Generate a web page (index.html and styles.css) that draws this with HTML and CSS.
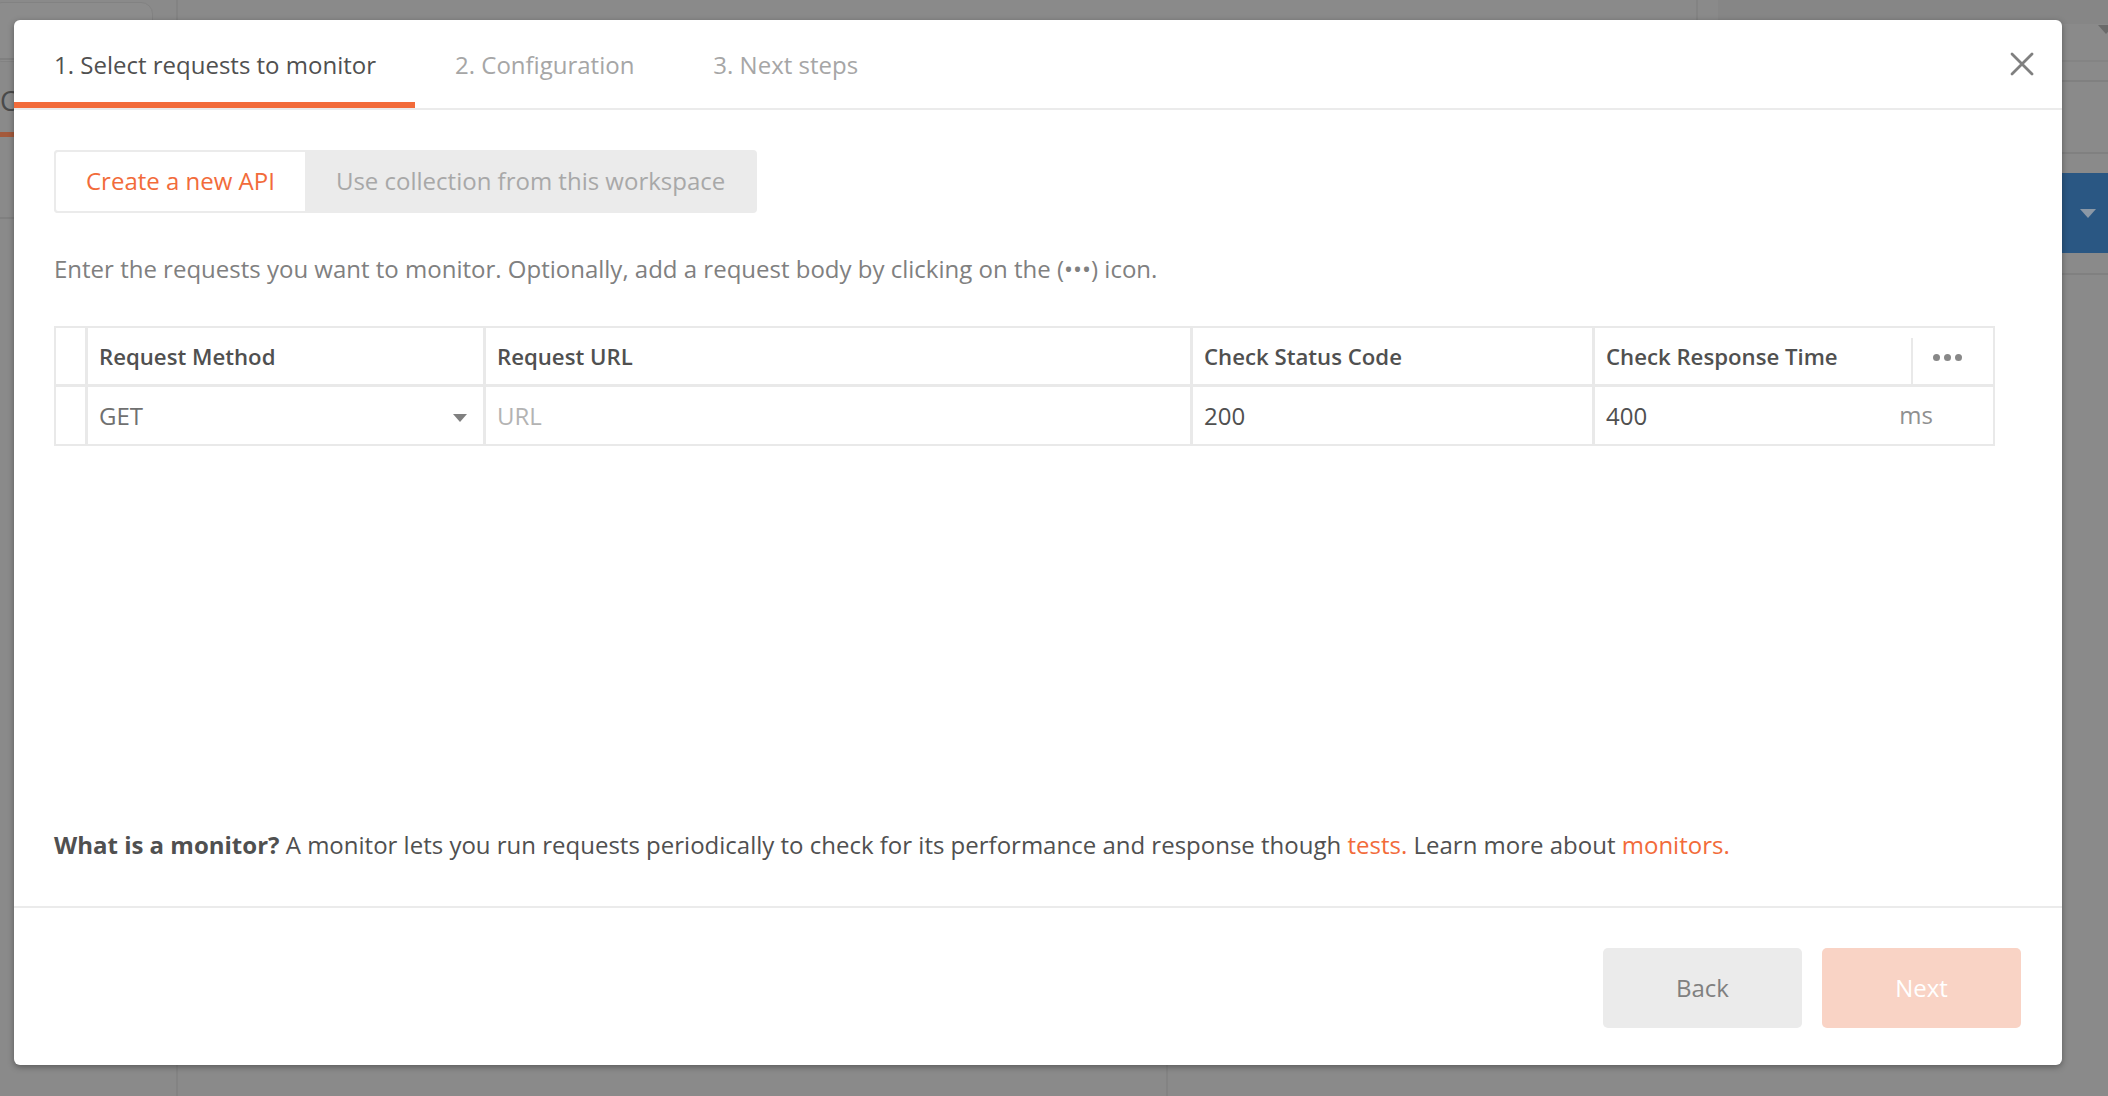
FILE: index.html
```html
<!DOCTYPE html>
<html lang="en">
<head>
<meta charset="utf-8">
<title>Create monitor</title>
<link rel="stylesheet" href="styles.css">
</head>
<body>
<div class="backdrop">
  <div class="bg-sidebar-tab"></div>
  <div class="bg-vline bg-v1"></div>
  <div class="bg-vline bg-v2"></div>
  <div class="bg-vline bg-v3"></div>
  <div class="bg-top-panel"></div>
  <div class="bg-hline bg-hl1"></div>
  <div class="bg-hline bg-hl2"></div>
  <div class="bg-letter">C</div>
  <div class="bg-orange"></div>
  <div class="bg-hline bg-hr1"></div>
  <div class="bg-hline bg-hr2"></div>
  <div class="bg-hline bg-hr3"></div>
  <div class="bg-hline bg-hr4"></div>
  <div class="bg-blue"><span class="bg-caret"></span></div>
  <span class="bg-caret bg-caret-top"></span>
</div>

<div class="modal">
  <header class="modal-header">
    <nav class="tabs">
      <div class="tab active">1. Select requests to monitor</div>
      <div class="tab">2. Configuration</div>
      <div class="tab">3. Next steps</div>
    </nav>
    <button class="close" aria-label="Close">
      <svg width="24" height="24" viewBox="0 0 24 24"><path d="M2 2 L22 22 M22 2 L2 22" stroke="#808080" stroke-width="2.8" stroke-linecap="round" fill="none"/></svg>
    </button>
  </header>

  <main class="modal-body">
    <div class="segmented">
      <div class="seg seg-active">Create a new API</div>
      <div class="seg">Use collection from this workspace</div>
    </div>

    <p class="desc">Enter the requests you want to monitor. Optionally, add a request body by clicking on the (&bull;&bull;&bull;) icon.</p>

    <div class="grid-table">
      <div class="cell handle"></div>
      <div class="cell head">Request Method</div>
      <div class="cell head">Request URL</div>
      <div class="cell head">Check Status Code</div>
      <div class="cell head head-last">
        <span class="head-label">Check Response Time</span>
        <span class="dots"><i></i><i></i><i></i></span>
      </div>

      <div class="cell handle"></div>
      <div class="cell method">GET <span class="caret"></span></div>
      <div class="cell placeholder">URL</div>
      <div class="cell value">200</div>
      <div class="cell value time">400 <span class="unit">ms</span></div>
    </div>

    <p class="info"><strong>What is a monitor?</strong> A monitor lets you run requests periodically to check for its performance and response though <a class="link">tests.</a> Learn more about <a class="link">monitors.</a></p>
  </main>

  <footer class="modal-footer">
    <button class="btn btn-back">Back</button>
    <button class="btn btn-next">Next</button>
  </footer>
</div>
</body>
</html>
```

FILE: styles.css
```css
* { box-sizing: border-box; }

html, body {
  margin: 0;
  padding: 0;
  width: 2108px;
  height: 1096px;
  overflow: hidden;
}

body {
  background: #8a8a8a;
  font-family: "Open Sans", "Noto Sans", "Liberation Sans", sans-serif;
  color: #505050;
  position: relative;
}

/* ---------- dimmed application behind the overlay ---------- */
.backdrop { position: absolute; inset: 0; }

.bg-sidebar-tab {
  position: absolute;
  left: -10px; top: 2px;
  width: 163px; height: 60px;
  border: 1px solid #828282;
  border-radius: 12px;
  background: #8c8c8c;
}
.bg-vline { position: absolute; width: 2px; background: #838383; top: 0; bottom: 0; }
.bg-v1 { left: 176px; }
.bg-v2 { left: 1166px; top: 1060px; }
.bg-v3 { left: 1696px; bottom: auto; height: 24px; }
.bg-top-panel {
  position: absolute;
  left: 1718px; top: 0;
  width: 400px; height: 24px;
  background: #868686;
}
.bg-hline { position: absolute; height: 2px; background: #808080; }
.bg-hl1 { left: 0; width: 20px; top: 58px; }
.bg-hl2 { left: 0; width: 20px; top: 217px; }
.bg-letter {
  position: absolute;
  left: 0; top: 86px;
  font-size: 27px;
  color: #4a4a4a;
  line-height: 30px;
}
.bg-orange { position: absolute; left: 0; width: 20px; top: 132px; height: 5px; background: #a45a3c; }
.bg-hr1 { left: 2050px; width: 60px; top: 60px; background: #848484; }
.bg-hr2 { left: 2050px; width: 60px; top: 80px; }
.bg-hr3 { left: 2050px; width: 60px; top: 152px; }
.bg-hr4 { left: 2050px; width: 60px; top: 273px; }
.bg-blue {
  position: absolute;
  left: 2050px; top: 173px;
  width: 60px; height: 80px;
  background: #2a5783;
}
.bg-caret {
  position: absolute;
  left: 30px; top: 36px;
  width: 0; height: 0;
  border-left: 8px solid transparent;
  border-right: 8px solid transparent;
  border-top: 9px solid #8b98a6;
}
.bg-caret-top { left: 2098px; top: 25px; border-top-color: #6a6a6a; }

/* ---------- modal ---------- */
.modal {
  position: absolute;
  left: 14px; top: 20px;
  width: 2048px; height: 1045px;
  background: #fff;
  border-radius: 6px;
  box-shadow: 0 2px 6px rgba(0, 0, 0, 0.35);
  display: flex;
  flex-direction: column;
}

.modal-header {
  height: 90px;
  border-bottom: 2px solid #ebebeb;
  display: flex;
  align-items: flex-start;
  justify-content: space-between;
}

.tabs { display: flex; }

.tab {
  height: 88px;
  padding: 6px 39px 0 40px;
  display: flex;
  align-items: center;
  font-size: 24px;
  color: #a6a6a6;
  border-bottom: 6px solid transparent;
}
.tab.active {
  color: #505050;
  border-bottom-color: #f26b3a;
}

.close {
  margin: 32px 28px 0 0;
  padding: 0;
  border: 0;
  background: none;
  width: 24px; height: 24px;
  display: flex;
}

.modal-body {
  flex: 1;
  padding: 40px 40px 45px 40px;
  display: flex;
  flex-direction: column;
  align-items: flex-start;
}

.segmented {
  display: flex;
  height: 63px;
  border-radius: 4px;
  background: #ebebeb;
  font-size: 24px;
}
.seg {
  display: flex;
  align-items: center;
  padding: 0 32px 2px 29px;
  color: #a8a8a8;
}
.seg-active {
  background: #fff;
  border: 2px solid #ebebeb;
  border-radius: 4px 0 0 4px;
  color: #f26b3a;
  padding: 0 30px 2px;
}

.desc {
  margin: 40px 0 0 0;
  font-size: 24px;
  line-height: 32px;
  color: #808080;
}

.grid-table {
  margin-top: 41px;
  width: 1941px;
  display: grid;
  grid-template-columns: 29px 395px 704px 399px 1fr;
  grid-template-rows: 56px 57px;
  gap: 3px;
  padding: 2px;
  background: #e9e9e9;
  font-size: 24px;
}

.cell {
  background: #fff;
  display: flex;
  align-items: center;
  padding: 0 11px;
  color: #505050;
}
.handle { padding: 0; }
.head { font-weight: 600; font-size: 22.2px; color: #505050; }
.head-last { padding-right: 0; align-items: stretch; }
.head-label { flex: 1; display: flex; align-items: center; }
.dots {
  width: 82px;
  margin-top: 10px;
  border-left: 2px solid #e9e9e9;
  display: flex;
  align-items: center;
  justify-content: center;
  gap: 4px;
  padding-bottom: 8px;
  padding-right: 12px;
}
.dots i {
  display: block;
  width: 7px; height: 7px;
  border-radius: 50%;
  background: #888;
}

.method {
  color: #707070;
  justify-content: space-between;
  padding-right: 16px;
}
.caret {
  width: 0; height: 0;
  border-left: 7px solid transparent;
  border-right: 7px solid transparent;
  border-top: 8px solid #808080;
  margin-top: 4px;
}
.placeholder { color: #b3b3b3; }
.value { color: #505050; }
.time { justify-content: space-between; padding-right: 60px; }
.unit { color: #909090; margin-top: -3px; }

.info {
  margin: auto 0 0 0;
  font-size: 24px;
  line-height: 32px;
  color: #505050;
}
.info strong { font-weight: 700; }
.link { color: #f26b3a; text-decoration: none; }

.modal-footer {
  height: 159px;
  border-top: 2px solid #ebebeb;
  display: flex;
  justify-content: flex-end;
  align-items: flex-start;
  gap: 20px;
  padding: 40px 41px 0 0;
}

.btn {
  width: 199px;
  height: 80px;
  border: 0;
  border-radius: 5px;
  font-family: inherit;
  font-size: 24px;
  padding-bottom: 2px;
}
.btn-back { background: #ebebeb; color: #808080; }
.btn-next { background: #f9d3c5; color: #fff; }
```
